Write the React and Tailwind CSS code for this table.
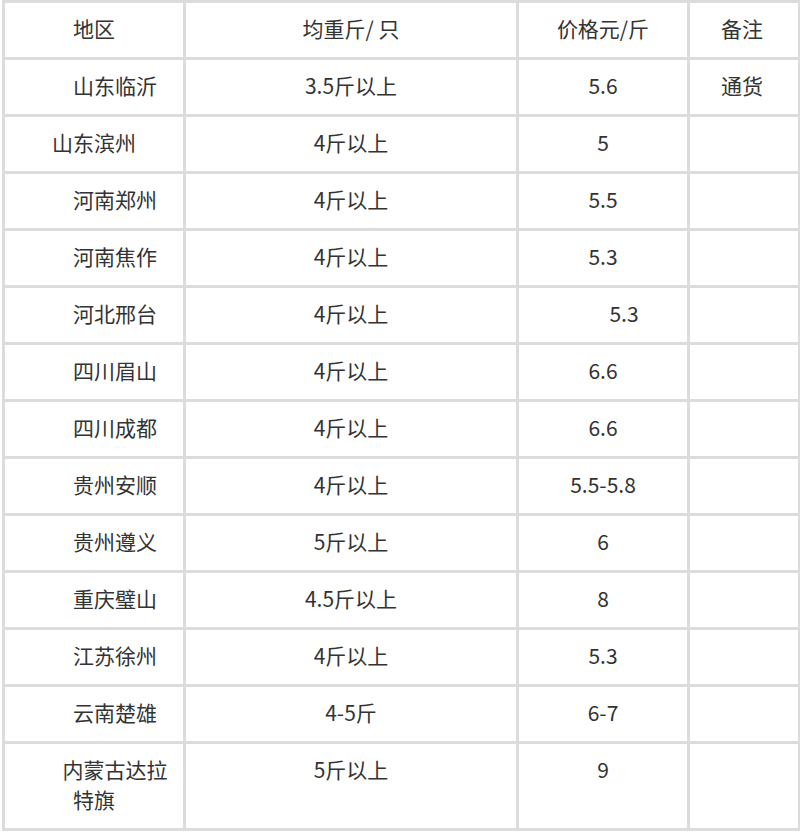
import React from "react";

const rows = [
  ["山东临沂", "3.5斤以上", "5.6", "通货", true],
  ["山东滨州", "4斤以上", "5", "", false],
  ["河南郑州", "4斤以上", "5.5", "", true],
  ["河南焦作", "4斤以上", "5.3", "", true],
  ["河北邢台", "4斤以上", "5.3", "", true, true],
  ["四川眉山", "4斤以上", "6.6", "", true],
  ["四川成都", "4斤以上", "6.6", "", true],
  ["贵州安顺", "4斤以上", "5.5-5.8", "", true],
  ["贵州遵义", "5斤以上", "6", "", true],
  ["重庆璧山", "4.5斤以上", "8", "", true],
  ["江苏徐州", "4斤以上", "5.3", "", true],
  ["云南楚雄", "4-5斤", "6-7", "", true],
  ["内蒙古达拉特旗", "5斤以上", "9", "", true],
];

const cell =
  "border-[3px] border-[#dcdcdc] px-[9px] pt-[10px] pb-[14px] text-center align-top";

export default function App() {
  return (
    <div
      className="bg-white w-[800px] h-[833px] pl-[2px] text-[21px] leading-[30px] text-[#333]"
      style={{ fontFamily: '"Noto Sans CJK SC", "Noto Sans", sans-serif' }}
    >
      <table className="table-fixed border-collapse w-[796px]">
        <colgroup>
          <col className="w-[181px]" />
          <col className="w-[333px]" />
          <col className="w-[171px]" />
          <col className="w-[111px]" />
        </colgroup>
        <thead>
          <tr>
            <th className={cell + " font-normal"}>地区</th>
            <th className={cell + " font-normal"}>均重斤/ 只</th>
            <th className={cell + " font-normal"}>价格元/斤</th>
            <th className={cell + " font-normal pr-[13px]"}>备注</th>
          </tr>
        </thead>
        <tbody>
          {rows.map(([area, weight, price, note, indent, priceIndent]) => (
            <tr key={area}>
              <td className={cell + (indent ? " indent-[2em]" : "")}>{area}</td>
              <td className={cell}>{weight}</td>
              <td className={cell + (priceIndent ? " indent-[2em]" : "")}>{price}</td>
              <td className={cell + " pr-[13px]"}>{note}</td>
            </tr>
          ))}
        </tbody>
      </table>
    </div>
  );
}
